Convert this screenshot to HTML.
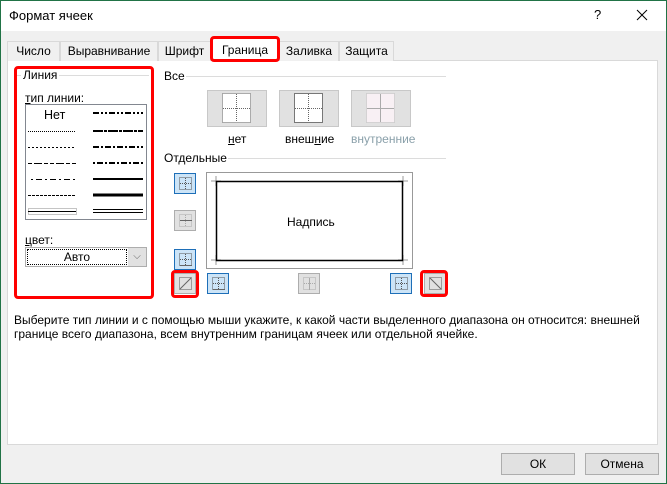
<!DOCTYPE html><html><head><meta charset="utf-8"><style>
*{margin:0;padding:0;box-sizing:border-box}
body{width:667px;height:484px;overflow:hidden;font-family:"Liberation Sans",sans-serif;font-size:12px;color:#000;background:#f0f0f0;position:relative}
.a{position:absolute}
.frame{left:0;top:0;width:667px;height:484px;border:1px solid #217346}
.tab{position:absolute;top:41px;height:20px;border:1px solid #d9d9d9;border-bottom:none;background:#f0f0f0;text-align:center;line-height:18px}
.red{position:absolute;border:3px solid #f00;border-radius:4px}
.gl{position:absolute;height:1px;background:#dcdcdc}
.big{position:absolute;top:90px;width:60px;height:37px;background:#e1e1e1;border:1px solid #c8c8c8}
.sb{position:absolute;width:22px;height:21px;border:1px solid #1e6fb8;background:#cce4f7}
.sb.g{border-color:#adadad;background:#e1e1e1}
.btn{position:absolute;top:453px;width:74px;height:22px;background:#e1e1e1;border:1px solid #adadad;text-align:center;line-height:20px}
</style></head><body>
<div class="a" style="left:0;top:0;width:667px;height:31px;background:#fff"></div>
<div class="a" style="left:9px;top:8px;font-size:13px">Формат ячеек</div>
<div class="a" style="left:594px;top:7px;font-size:13px">?</div>
<svg class="a" style="left:636px;top:9px" width="12" height="12"><path d="M1 1L11 11M11 1L1 11" stroke="#000" stroke-width="1"/></svg>
<div class="a" style="left:7px;top:60px;width:651px;height:385px;background:#fff;border:1px solid #d9d9d9"></div>
<div class="tab" style="left:7px;width:53px">Число</div>
<div class="tab" style="left:60px;width:98px">Выравнивание</div>
<div class="tab" style="left:158px;width:53px">Шрифт</div>
<div class="tab" style="left:211px;top:38px;height:23px;width:68px;background:#fff;line-height:22px">Граница</div>
<div class="tab" style="left:279px;width:60px">Заливка</div>
<div class="tab" style="left:339px;width:55px">Защита</div>
<div class="red" style="left:210px;top:36px;width:70px;height:26px"></div>

<div class="gl" style="left:16px;top:75px;width:133px"></div>
<div class="a" style="left:21px;top:68px;background:#fff;padding:0 2px">Линия</div>
<div class="a" style="left:25px;top:91px"><u>т</u>ип линии:</div>
<div class="a" style="left:25px;top:104px;width:122px;height:116px;border:1px solid #828790;background:#fff"></div>
<svg class="a" style="left:25px;top:104px" width="122" height="116">
<g stroke="#000" fill="none">
<path d="M3 27.5H51" stroke-dasharray="1 1"/>
<path d="M3 43.5H51" stroke-dasharray="2 2"/>
<path d="M3 59.5H51" stroke-dasharray="4 2 8 2 4 2"/>
<path d="M6 75.5H51" stroke-dasharray="2 3 6 3"/>
<path d="M3 91.5H51" stroke-dasharray="3 1"/>
<rect x="3.5" y="104.5" width="48" height="6" stroke="#888" stroke-dasharray="1 1"/>
<path d="M3 107.5H51"/>
<path d="M68 9H118" stroke-width="2" stroke-dasharray="6 2 2 2 2 2"/>
<path d="M68 27H118" stroke-width="2" stroke-dasharray="10 1 3 1"/>
<path d="M68 43H118" stroke-width="2" stroke-dasharray="6 2 2 2"/>
<path d="M68 59H118" stroke-width="2" stroke-dasharray="2 2 6 2"/>
<path d="M68 75H118" stroke-width="2"/>
<path d="M68 91H118" stroke-width="3"/>
<path d="M68 105.5H118M68 108.5H118"/>
</g></svg>
<div class="a" style="left:44px;top:108px;font-size:12.5px">Нет</div>
<div class="a" style="left:25px;top:233px"><u>ц</u>вет:</div>
<div class="a" style="left:25px;top:247px;width:122px;height:20px;border:1px solid #adadad;background:#fff"></div>
<div class="a" style="left:27px;top:249px;width:100px;height:16px;border:1px dotted #000;text-align:center;line-height:14px">Авто</div>
<div class="a" style="left:128px;top:248px;width:18px;height:18px;background:#e1e1e1;color:#666;text-align:center;font-size:10px;line-height:18px">⌵</div>
<div class="red" style="left:14px;top:66px;width:140px;height:233px"></div>

<div class="gl" style="left:186px;top:76px;width:260px"></div>
<div class="a" style="left:164px;top:69px">Все</div>
<div class="big" style="left:207px"></div>
<div class="big" style="left:279px"></div>
<div class="big" style="left:351px"></div>
<svg class="a" style="left:207px;top:90px" width="210" height="37"><g fill="none">
<rect x="15.5" y="3.5" width="28" height="29" stroke="#666" stroke-dasharray="1 1" fill="#fff"/><path d="M29.5 4V32M16 18.5H43" stroke="#666" stroke-dasharray="1 1"/>
<rect x="87.5" y="3.5" width="28" height="29" stroke="#777" fill="#fff"/><path d="M101.5 4V32M88 18.5H115" stroke="#666" stroke-dasharray="1 1"/>
<rect x="159.5" y="3.5" width="28" height="29" stroke="#bbb" stroke-dasharray="1 1" fill="#f8f0f4"/><path d="M173.5 4V32M160 18.5H187" stroke="#aaa"/>
</g></svg>
<div class="a" style="left:228px;top:132px"><u>н</u>ет</div>
<div class="a" style="left:285px;top:132px">внеш<u>н</u>ие</div>
<div class="a" style="left:351px;top:132px;color:#8aa0aa">внутренние</div>

<div class="gl" style="left:228px;top:158px;width:218px"></div>
<div class="a" style="left:164px;top:151px">Отдельные</div>
<div class="a" style="left:206px;top:172px;width:207px;height:97px;border:1px solid #999;background:#fff"></div>
<svg class="a" style="left:206px;top:172px" width="207" height="97"><g stroke="#999"><path d="M5 9H15M192 9H202M5 88H15M192 88H202M10 4V14M197 4V14M10 83V93M197 83V93"/></g>
<rect x="10.5" y="9.5" width="186" height="79" fill="none" stroke="#000" stroke-width="1.5"/></svg>
<div class="a" style="left:287px;top:215px">Надпись</div>

<div class="sb" style="left:174px;top:173px"></div>
<div class="sb g" style="left:174px;top:210px"></div>
<div class="sb" style="left:174px;top:249px"></div>
<div class="sb g" style="left:174px;top:273px"></div>
<div class="sb" style="left:207px;top:273px"></div>
<div class="sb g" style="left:298px;top:273px"></div>
<div class="sb" style="left:390px;top:273px"></div>
<div class="sb g" style="left:424px;top:273px"></div>
<svg class="a" style="left:0;top:0" width="667" height="484"><g fill="none" stroke="#555" stroke-dasharray="1 1">
<rect x="179.5" y="177.5" width="12" height="12"/><path d="M185.5 178V190M180 183.5H192"/>
<rect x="179.5" y="214.5" width="12" height="12" stroke="#aaa"/><path d="M185.5 215V227" stroke="#aaa"/>
<rect x="179.5" y="253.5" width="12" height="12"/><path d="M185.5 254V266M180 259.5H192"/>
<rect x="179.5" y="277.5" width="12" height="12"/>
<rect x="212.5" y="277.5" width="12" height="12"/><path d="M218.5 278V290M213 283.5H225"/>
<rect x="303.5" y="277.5" width="12" height="12" stroke="#aaa"/><path d="M304 283.5H316" stroke="#aaa"/>
<rect x="395.5" y="277.5" width="12" height="12"/><path d="M401.5 278V290M396 283.5H408"/>
<rect x="429.5" y="277.5" width="12" height="12"/>
</g><g stroke="#666"><path d="M180 289L191 278M430 278L441 289M180 265.5H192M213 289.5H225M180 220.5H192"/><path d="M309.5 278V290" stroke="#aaa"/></g></svg>
<div class="red" style="left:171px;top:270px;width:28px;height:28px"></div>
<div class="red" style="left:420px;top:270px;width:28px;height:27px"></div>

<div class="a" style="left:14px;top:313px;width:630px;line-height:14px">Выберите тип линии и с помощью мыши укажите, к какой части выделенного диапазона он относится: внешней границе всего диапазона, всем внутренним границам ячеек или отдельной ячейке.</div>

<div class="btn" style="left:501px">ОК</div>
<div class="btn" style="left:585px">Отмена</div>
<div class="a frame"></div>
</body></html>
